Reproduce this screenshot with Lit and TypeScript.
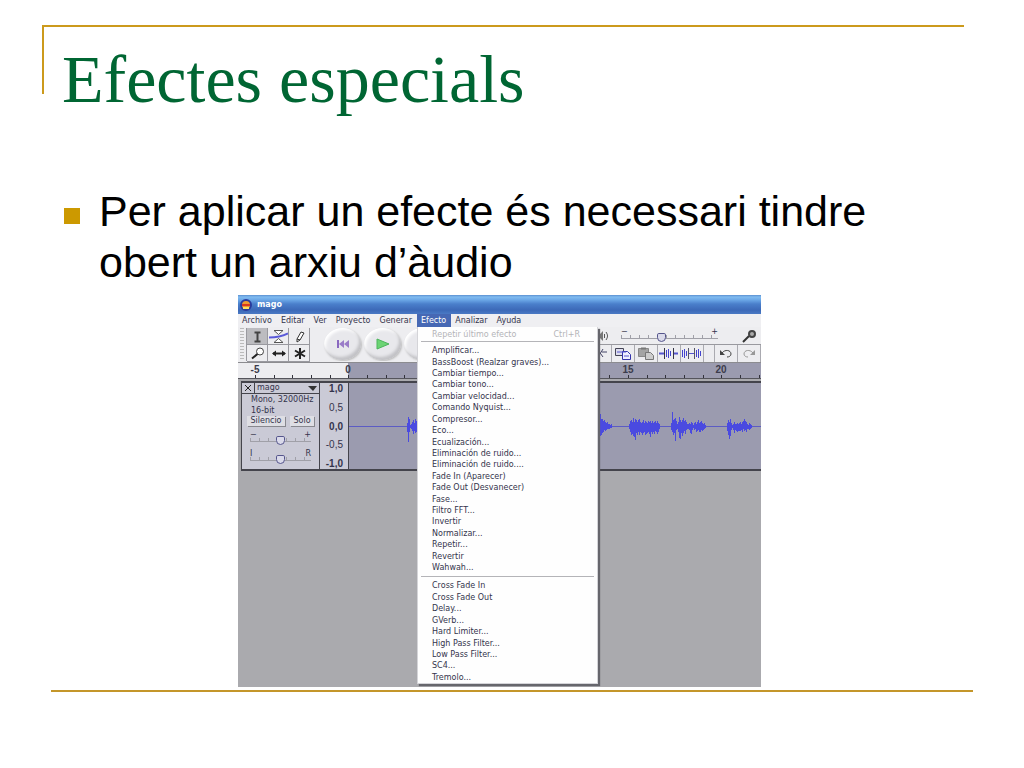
import { LitElement, html, svg, css } from "lit";
import { customElement } from "lit/decorators.js";
import { classMap } from "lit/directives/class-map.js";

const MENUS = ["Archivo", "Editar", "Ver", "Proyecto", "Generar", "Efecto", "Analizar", "Ayuda"];

const BUILT_IN = [
  "Amplificar...", "BassBoost (Realzar graves)...", "Cambiar tiempo...", "Cambiar tono...",
  "Cambiar velocidad...", "Comando Nyquist...", "Compresor...", "Eco...", "Ecualización...",
  "Eliminación de ruido...", "Eliminación de ruido....", "Fade In (Aparecer)",
  "Fade Out (Desvanecer)", "Fase...", "Filtro FFT...", "Invertir", "Normalizar...",
  "Repetir...", "Revertir", "Wahwah...",
];

const PLUGINS = [
  "Cross Fade In", "Cross Fade Out", "Delay...", "GVerb...", "Hard Limiter...",
  "High Pass Filter...", "Low Pass Filter...", "SC4...", "Tremolo...",
];

const TOOLS = [
  { name: "Selección", icon: svg`<path d="M7.500 4.500h6M7.500 13.500h6M10.500 4.500v9" stroke="#444" stroke-width="2"/>` },
  { name: "Envolvente", icon: svg`<path d="M6 2.500h9l-4.500 4zM6 14.500h9l-4.500-4z" stroke="#555" fill="#fff"/><path d="M1 9.500c6 0 11 0 19-4" stroke="#5a5ad8" stroke-width="2"/>` },
  { name: "Dibujo", icon: svg`<path d="M8 11l4-7 3 1-4 7-3 2z" stroke="#333" fill="#fff"/><path d="M8 11l3 1" stroke="#333"/>` },
  { name: "Zoom", icon: svg`<circle cx="13" cy="6.500" r="3.500" stroke="#444" fill="#fff"/><path d="M10.500 9L5 13.500" stroke="#222" stroke-width="2"/>` },
  { name: "Traslado", icon: svg`<path d="M5 8.500h12" stroke="#222" stroke-width="2"/><path d="M4 8.500l4-3v6zM18 8.500l-4-3v6z" fill="#222"/>` },
  { name: "Multiherramienta", icon: svg`<path d="M11 3v11M6 5.500l10 6M16 5.500l-10 6" stroke="#222" stroke-width="2"/>` },
];

const EDITS = [
  { name: "Cortar", icon: svg`<path d="M9 5l5 7M14 4l-5 8M4 8.500h4M13 7h5" stroke="#446"/><circle cx="8" cy="12" r="2" stroke="#446"/>` },
  { name: "Copiar", icon: svg`<path d="M3.500 3.500h8v7h-8z" stroke="#445" fill="#dde"/><path d="M10.500 6.500h5l3 3v5h-8z" stroke="#33a" fill="#eef"/><path d="M5 7h9M12 11h5" stroke="#55c"/>` },
  { name: "Pegar", icon: svg`<path d="M3.500 3.500h10v8h-10z" stroke="#888" fill="#a4a4a4"/><path d="M6 2.500h5v2h-5z" fill="#777"/><path d="M10.500 7.500h5l3 3v4h-8z" stroke="#777" fill="#ccc"/>` },
  { name: "Recortar", icon: svg`<path d="M1 8.500h5M15 8.500h5" stroke="#55c" stroke-width="2"/><path d="M6.500 3v11M15.500 3v11" stroke="#334"/><path d="M8.500 5v7M10.500 4v9M12.500 6v5" stroke="#44c"/>` },
  { name: "Silenciar", icon: svg`<path d="M8 8.500h6" stroke="#55c"/><path d="M1.500 5v7M3.500 4v9M5.500 6v5M15.500 5v7M17.500 4v9M19.500 6v5" stroke="#44c"/><path d="M7.500 3v11M13.500 3v11" stroke="#556"/>` },
];

const HISTORY = [
  { name: "Deshacer", icon: svg`<path d="M7 8c3-4 9-3 9 1 0 2-2 3-4 3" stroke="#444"/><path d="M5 5v5h5z" fill="#444"/>` },
  { name: "Rehacer", icon: svg`<path d="M15 8c-3-4-9-3-9 1 0 2 2 3 4 3" stroke="#999"/><path d="M17 5v5h-5z" fill="#999"/>` },
];

// Each burst starts at x and holds one [up, down] amplitude per pixel column.
const BURSTS: Array<{ x: number; amps: Array<[number, number]> }> = [
  { x: 58, amps: [[3, 5], [9, 15], [7, 5], [1, 1], [2, 2], [4, 4], [6, 7], [3, 4], [7, 6], [5, 5]] },
  { x: 250, amps: [[8, 8], [12, 9], [7, 8], [7, 6], [5, 5], [6, 3], [4, 4], [3, 3], [4, 2], [2, 2], [2, 2], [1, 1], [2, 1]] },
  { x: 280, amps: [[2, 2], [5, 5], [6, 8], [4, 7], [8, 9], [4, 10], [7, 13], [6, 6], [4, 8], [6, 5], [7, 8], [4, 5], [3, 6], [4, 8], [6, 6], [3, 5], [5, 8], [4, 7], [3, 6], [5, 5], [4, 7], [5, 10], [3, 5], [5, 7], [3, 5], [4, 7], [5, 4], [3, 5], [5, 7], [3, 5], [2, 2]] },
  { x: 322, amps: [[3, 3], [14, 5], [6, 8], [7, 6], [8, 14], [5, 3], [2, 2], [4, 5], [9, 11], [6, 12], [4, 6], [6, 9], [8, 6], [5, 4], [6, 7], [4, 3], [2, 2], [2, 2], [3, 3], [2, 6], [4, 7], [3, 3], [1, 1], [3, 3], [4, 2], [2, 5], [4, 4], [6, 3], [3, 5], [4, 5], [5, 3], [3, 4], [2, 3], [3, 2], [1, 1]] },
  { x: 378, amps: [[3, 4], [6, 8], [4, 12], [7, 9], [3, 3], [1, 1], [2, 3], [4, 6], [2, 3], [2, 4], [3, 5], [2, 4], [3, 4], [4, 4], [2, 3], [4, 5], [5, 2], [7, 4], [5, 3], [4, 5], [2, 2], [1, 2], [3, 3], [2, 2], [1, 1]] },
];

const TICKS = Array.from({ length: 28 }, (_, i) => Math.round(17 + i * 18.65));
const RULER = [
  { x: 17, label: "-5" },
  { x: 110, label: "0" },
  { x: 390, label: "15" },
  { x: 483, label: "20" },
];
const LEVELS = ["1,0", "0,5", "0,0", "-0,5", "-1,0"];

@customElement("audio-editor")
export class AudioEditor extends LitElement {
  static styles = css`
    :host {
      display: flex;
      flex-direction: column;
      box-sizing: border-box;
      background: #aaaaae;
      color: #34344c;
      font: 8px/12px "DejaVu Sans", sans-serif;
    }
    * { box-sizing: border-box; }
    button {
      margin: 0;
      padding: 0;
      border: 0;
      background: none;
      color: inherit;
      font: inherit;
    }
    svg { display: block; fill: none; }
    .titlebar {
      display: flex;
      align-items: center;
      gap: 5px;
      height: 19px;
      padding: 0 2px;
      background: linear-gradient(#5b8fd0 0, #80bbf0 2px, #6aa6e6 5px, #4a7fcb 9px, #3c69b8 15px, #4a79c4 19px);
      color: #fff;
      font-weight: bold;
    }
    .menubar {
      display: flex;
      height: 13px;
      background: #efeff2;
    }
    .entry { position: relative; }
    .entry > button {
      display: block;
      height: 13px;
      padding: 0 5px 0 4px;
    }
    .entry.open > button { background: #4668b4; color: #fff; }
    .menu {
      position: absolute;
      z-index: 2;
      top: 100%;
      left: 0;
      display: flex;
      flex-direction: column;
      width: 181px;
      height: 357px;
      padding: 1px 3px 0;
      border: 1px solid #d4d4d8;
      border-top: 0;
      background: #fefefe;
      box-shadow: 2px 2px 1px #66666c;
      line-height: 11px;
    }
    .menu button {
      display: flex;
      align-items: center;
      justify-content: space-between;
      padding: 0 14px 0 11px;
      text-align: left;
      white-space: nowrap;
    }
    .menu button:disabled { flex: none; height: 13px; color: #b4b4b8; }
    .menu hr {
      flex: none;
      width: 100%;
      height: 1px;
      margin: 0;
      border: 0;
      background: #b4b4b8;
    }
    .group { display: grid; grid-auto-rows: 1fr; min-height: 0; margin: 3px 0; }
    .builtin { flex: 20 1 0; }
    .plugins { flex: 9 1 0; margin-bottom: 0; }
    .toolbars {
      display: flex;
      height: 36px;
      padding: 1px 0;
      border-bottom: 1px solid #8c8c90;
      background: #ededf0;
    }
    .grip {
      width: 4px;
      margin: 0 2px;
      background: repeating-linear-gradient(#bbb 0 1px, transparent 1px 3px);
    }
    .tools {
      display: grid;
      grid-template-columns: repeat(3, 21px);
      grid-template-rows: 17px 17px;
      border-left: 1px solid #99999f;
    }
    .tools button {
      overflow: hidden;
      border-right: 1px solid #99999f;
      border-bottom: 1px solid #99999f;
    }
    .tools .pressed { background: #bcbcc0; }
    .transport {
      display: flex;
      flex: 1;
      gap: 3px;
      padding-left: 14px;
      overflow: hidden;
    }
    .transport button {
      display: grid;
      flex: none;
      place-items: center;
      width: 37px;
      height: 32px;
      border-radius: 50%;
      background: #e8e8ec;
      box-shadow: inset -2px -3px 3px #c2c2c6, inset 2px 2px 3px #fff, 1px 1px 2px #bbb;
    }
    .side { width: 172px; }
    .mixer {
      display: flex;
      align-items: center;
      height: 17px;
      padding-left: 9px;
      border-bottom: 1px solid #99999f;
    }
    .mixer .ends {
      display: grid;
      flex: none;
      grid-template-columns: 1fr 1fr;
      width: 97px;
      margin: 0 22px 0 12px;
      line-height: 5px;
    }
    .mixer .ends span:nth-of-type(2) { text-align: right; }
    .mixer input { grid-column: 1 / 3; width: 100%; margin: -2px 0 0; }
    .edits { display: flex; height: 17px; }
    .edits button { width: 23px; overflow: hidden; border-right: 1px solid #aaaab0; }
    .gap { flex: 1; border-right: 1px solid #aaaab0; }
    .slider {
      height: 12px;
      appearance: none;
      background:
        linear-gradient(#a0a0a8, #a0a0a8) 0 6px / 100% 1px no-repeat,
        repeating-linear-gradient(90deg, #a0a0a8 0 1px, transparent 1px 9px) 0 3px / 100% 3px no-repeat;
    }
    .slider::-webkit-slider-thumb {
      appearance: none;
      width: 9px;
      height: 9px;
      border: 1px solid #55558c;
      border-radius: 2px 2px 5px 5px;
      background: #dadaea;
    }
    .ruler, .wave { overflow: hidden; }
    .ruler {
      height: 16px;
      border-bottom: 1px solid #55555c;
      background: linear-gradient(90deg, #ededf0 110px, #9b9baf 110px);
    }
    .track {
      display: flex;
      height: 90px;
      margin: 2px 0 0 3px;
      border: 1px solid #44444c;
      border-width: 2px 0 2px 1px;
      background: #9b9baf;
    }
    .panel {
      display: flex;
      flex-direction: column;
      width: 78px;
      border-right: 1px solid #44444c;
      background: #cacad6;
    }
    .name {
      display: flex;
      height: 11px;
      border-bottom: 1px solid #44444c;
      line-height: 10px;
    }
    .close { width: 13px; border-right: 1px solid #44444c; }
    .name .pick { display: flex; flex: 1; align-items: center; justify-content: space-between; padding: 0 2px; }
    .info { margin: 0; padding: 0 9px; line-height: 11px; white-space: nowrap; }
    .toggles { display: flex; gap: 5px; height: 10px; padding: 0 5px; }
    .toggles button {
      flex: 1 0 auto;
      background: #dedee4;
      box-shadow: 1px 1px 0 #88888f;
      line-height: 10px;
    }
    .fader {
      display: grid;
      grid-template-columns: 1fr 1fr;
      padding: 5px 8px 0;
      line-height: 8px;
    }
    .fader span:nth-of-type(2) { text-align: right; }
    .fader input { grid-column: 1 / 3; width: 100%; height: 10px; margin: -4px 0 0; }
    .levels {
      display: flex;
      flex-direction: column;
      justify-content: space-between;
      width: 29px;
      padding-right: 5px;
      border-right: 1px solid #44444c;
      background: #cacad6;
      font: 10px/11px "Liberation Sans", sans-serif;
      text-align: right;
    }
    .levels .strong { font-weight: bold; }
    .wave { flex: 1; min-width: 0; }
    .rest { flex: 1; }
    .scale { font: bold 10px "Liberation Sans", sans-serif; fill: #3c3c4c; }
  `;

  private menu() {
    return html`<div class="menu">
      <button disabled><span>Repetir último efecto</span><span>Ctrl+R</span></button>
      <hr />
      <div class="group builtin">${BUILT_IN.map((t) => html`<button>${t}</button>`)}</div>
      <hr />
      <div class="group plugins">${PLUGINS.map((t) => html`<button>${t}</button>`)}</div>
    </div>`;
  }

  private iconButton(item: { name: string; icon: unknown }, pressed = false) {
    return html`<button class=${classMap({ pressed })} aria-label=${item.name}>
      <svg width="21" height="17">${item.icon}</svg>
    </button>`;
  }

  private wavePath() {
    return BURSTS.map((b) => b.amps.map(([up, down], i) => `M${b.x + i + 0.5} ${43 - up}V${44 + down}`).join("")).join("");
  }

  render() {
    return html`
      <div class="titlebar">
        <svg width="12" height="14" viewBox="0 0 12 14">
          <circle cx="6" cy="7" r="5" fill="#f09a30" stroke="#2a3a9c" stroke-width="2" />
          <path d="M2 7h8" stroke="#d83a20" stroke-width="2" />
          <path d="M3 10h6" stroke="#ffe060" stroke-width="2" />
        </svg>
        <span>mago</span>
      </div>
      <nav class="menubar">
        ${MENUS.map((m) => html`<div class=${classMap({ entry: true, open: m === "Efecto" })}>
          <button>${m}</button>${m === "Efecto" ? this.menu() : ""}
        </div>`)}
      </nav>
      <div class="toolbars">
        <div class="grip"></div>
        <div class="tools">${TOOLS.map((t, i) => this.iconButton(t, i === 0))}</div>
        <div class="transport">
          <button aria-label="Inicio"><svg width="12" height="10"><path d="M1 1v8" stroke="#8a68c0" stroke-width="2" /><path d="M2 5l5-4v8zM7 5l5-4v8z" fill="#9a7cc8" /></svg></button>
          <button aria-label="Reproducir"><svg width="14" height="12"><path d="M1 1l12 5-12 5z" fill="#6cd474" stroke="#4cb45c" /></svg></button>
          <button aria-label="Grabar"><svg width="12" height="12"><circle cx="6" cy="6" r="5" fill="#c88" /></svg></button>
        </div>
        <div class="side">
          <div class="mixer">
            <svg width="11" height="14"><path d="M0 5h2l3-3v10l-3-3h-2z" fill="#777" /><path d="M6.500 5v4M8 3c2 3 2 5 0 8" stroke="#555" /></svg>
            <label class="ends"><span>−</span><span>+</span><input class="slider" type="range" aria-label="Volumen" value="41" /></label>
            <svg width="18" height="15"><path d="M9 7l-6 6" stroke="#333" stroke-width="2" /><circle cx="12" cy="5" r="3" fill="#aaa" stroke="#444" stroke-width="2" /></svg>
          </div>
          <div class="edits">
            ${EDITS.map((t) => this.iconButton(t))}
            <div class="gap"></div>
            ${HISTORY.map((t) => this.iconButton(t))}
          </div>
        </div>
      </div>
      <div class="ruler">
        <svg width="100%" height="15">
          <path d=${TICKS.map((x) => `M${x + 0.5} 12v3`).join("")} stroke="#33333c" />
          ${RULER.map((r) => svg`<text class="scale" x=${r.x} y="10" text-anchor="middle">${r.label}</text>`)}
        </svg>
      </div>
      <div class="track">
        <div class="panel">
          <div class="name">
            <button class="close" aria-label="Cerrar pista"><svg width="12" height="10"><path d="M3 2l6 6M9 2l-6 6" stroke="#222" /></svg></button>
            <button class="pick">mago<svg width="9" height="5"><path d="M0 0h9l-4 5z" fill="#333" /></svg></button>
          </div>
          <p class="info">Mono, 32000Hz<br />16-bit</p>
          <div class="toggles"><button>Silencio</button><button>Solo</button></div>
          <label class="fader"><span>−</span><span>+</span><input class="slider" type="range" aria-label="Ganancia" /></label>
          <label class="fader"><span>I</span><span>R</span><input class="slider" type="range" aria-label="Balance" /></label>
        </div>
        <div class="levels">${LEVELS.map((l, i) => html`<span class=${classMap({ strong: i % 2 === 0 })}>${l}</span>`)}</div>
        <div class="wave">
          <svg width="100%" height="86">
            <path d="M0 43.500h2000" stroke="#5c5cc4" />
            <path d=${this.wavePath()} stroke="#4a4ae0" />
          </svg>
        </div>
      </div>
      <div class="rest"></div>
    `;
  }
}

@customElement("app-root")
export class AppRoot extends LitElement {
  static styles = css`
    :host { display: block; min-height: 100vh; background: #fff; }
    .head {
      margin: 0 60px 0 42px;
      border-top: 2px solid #cc9a1c;
    }
    .slide { padding-top: 25px; }
    h1 {
      height: 67px;
      margin: 0;
      padding-left: 18px;
      border-left: 2px solid #cc9a1c;
      color: #006633;
      font: 68px/104px "Liberation Serif", serif;
    }
    .body { margin: 0 51px; border-bottom: 2px solid #c4962a; padding-bottom: 3px; }
    ul { margin: 92px 0 7px; padding: 0 50px 0 13px; list-style: none; }
    li {
      display: flex;
      gap: 19px;
      color: #000;
      font: 43px/51px "Liberation Sans", sans-serif;
    }
    .mark { flex: none; width: 16px; height: 16px; margin-top: 22px; background: #cc9900; }
    audio-editor { width: min(523px, 100%); height: 392px; margin-left: 187px; }
  `;

  render() {
    return html`<main class="slide">
      <header class="head"><h1>Efectes especials</h1></header>
      <div class="body">
        <ul>
          <li><span class="mark"></span><span>Per aplicar un efecte és necessari tindre obert un arxiu d’àudio</span></li>
        </ul>
        <audio-editor></audio-editor>
      </div>
    </main>`;
  }
}
